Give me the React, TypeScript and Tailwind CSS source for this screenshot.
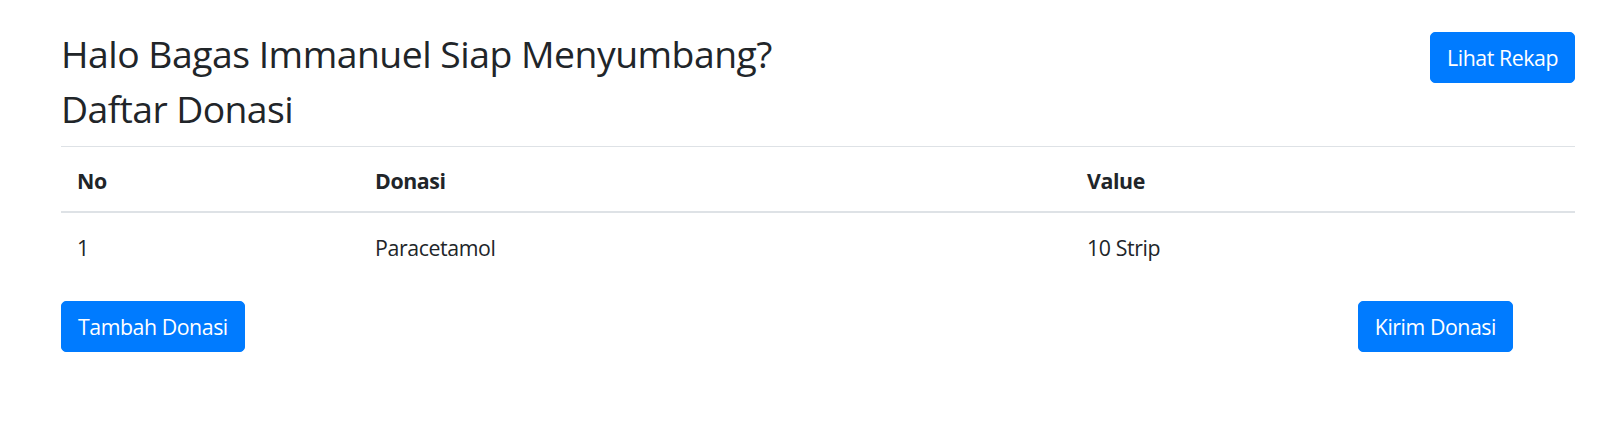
const rows = [{ no: 1, donasi: "Paracetamol", value: "10 Strip" }];

function Btn({ children }: { children: React.ReactNode }) {
  return (
    <button className="rounded-[5px] border border-[#007bff] bg-[#007bff] px-4 py-[8.5px] text-[21.33px] leading-[32px] tracking-[-0.45px] text-white">
      {children}
    </button>
  );
}

export default function App() {
  return (
    <div className="min-h-screen bg-white font-['Open_Sans','Noto_Sans',sans-serif] text-[#212529]">
      <div className="px-[61px] pt-8 pr-[41px]">
        <div className="flex items-start justify-between">
          <div>
            <h3 className="mb-[10.7px] text-[37.33px] leading-[44.8px] font-normal tracking-[-0.5px]">
              Halo Bagas Immanuel Siap Menyumbang?
            </h3>
            <h3 className="mb-[14px] text-[37.33px] leading-[44.8px] font-normal tracking-[-0.6px]">
              Daftar Donasi
            </h3>
          </div>
          <Btn>Lihat Rekap</Btn>
        </div>

        <table className="mb-[21px] w-full border-collapse text-[21.33px] leading-[32px] tracking-[-0.4px]">
          <thead>
            <tr>
              <th className="w-[298px] border-t border-b-2 border-[#dee2e6] px-4 pt-[18px] pb-[14px] text-left font-bold">No</th>
              <th className="w-[712px] border-t border-b-2 border-[#dee2e6] px-4 pt-[18px] pb-[14px] text-left font-bold">Donasi</th>
              <th className="border-t border-b-2 border-[#dee2e6] px-4 pt-[18px] pb-[14px] text-left font-bold">Value</th>
            </tr>
          </thead>
          <tbody>
            {rows.map((r) => (
              <tr key={r.no}>
                <td className="px-4 pt-[19px] pb-4">{r.no}</td>
                <td className="px-4 pt-[19px] pb-4">{r.donasi}</td>
                <td className="px-4 pt-[19px] pb-4">{r.value}</td>
              </tr>
            ))}
          </tbody>
        </table>

        <div className="flex items-center justify-between pr-[62px]">
          <Btn>Tambah Donasi</Btn>
          <Btn>Kirim Donasi</Btn>
        </div>
      </div>
    </div>
  );
}
